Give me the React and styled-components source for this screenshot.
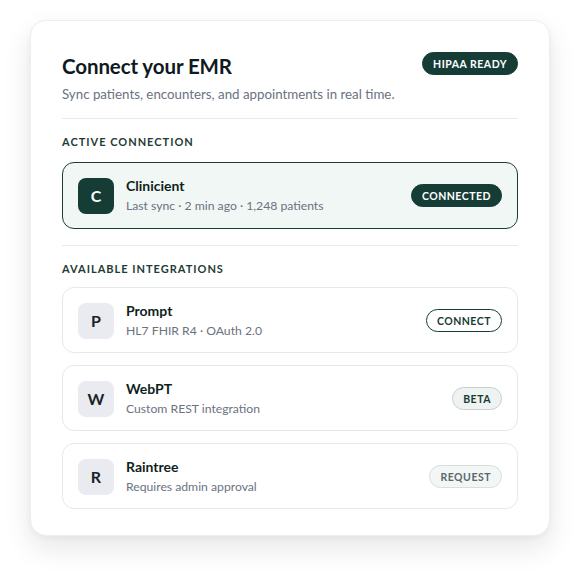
import styled, { createGlobalStyle } from "styled-components";

const GlobalStyle = createGlobalStyle`
  html, body {
    margin: 0;
    padding: 0;
    background: #ffffff;
  }
  body {
    font-family: "Lato", "Noto Sans", sans-serif;
    -webkit-font-smoothing: antialiased;
  }
`;

const integrations = [
  { letter: "P", name: "Prompt", detail: "HL7 FHIR R4 · OAuth 2.0", action: "CONNECT", kind: "outline" },
  { letter: "W", name: "WebPT", detail: "Custom REST integration", action: "BETA", kind: "soft" },
  { letter: "R", name: "Raintree", detail: "Requires admin approval", action: "REQUEST", kind: "muted" },
];

const App = () => {
  return (
    <>
      <GlobalStyle />
      <Page>
        <Card>
          <Header>
            <div>
              <Title>Connect your EMR</Title>
              <Subtitle>Sync patients, encounters, and appointments in real time.</Subtitle>
            </div>
            <Pill kind="solid">HIPAA READY</Pill>
          </Header>

          <Divider top={14} bottom={15} />

          <Section gap={12}>
            <SectionLabel>Active Connection</SectionLabel>
            <Row active>
              <Avatar active>C</Avatar>
              <RowText>
                <RowName>Clinicient</RowName>
                <RowDetail>Last sync · 2 min ago · 1,248 patients</RowDetail>
              </RowText>
              <Pill kind="solid">CONNECTED</Pill>
            </Row>
          </Section>

          <Divider top={16} bottom={15} />

          <Section gap={10}>
            <SectionLabel>Available Integrations</SectionLabel>
            <List>
              {integrations.map((item) => (
                <Row key={`integration-${item.name}`}>
                  <Avatar>{item.letter}</Avatar>
                  <RowText>
                    <RowName>{item.name}</RowName>
                    <RowDetail>{item.detail}</RowDetail>
                  </RowText>
                  <Pill kind={item.kind}>{item.action}</Pill>
                </Row>
              ))}
            </List>
          </Section>
        </Card>
      </Page>
    </>
  );
};

const Page = styled.div`
  width: 580px;
  height: 576px;
  box-sizing: border-box;
  padding: 20px 30px;
`;

const Card = styled.div`
  box-sizing: border-box;
  width: 520px;
  background: #ffffff;
  border: 1px solid #eceef1;
  border-radius: 16px;
  box-shadow: 0 12px 28px rgba(17, 24, 39, 0.1), 0 2px 6px rgba(17, 24, 39, 0.04);
  padding: 31px 31px 26px;
`;

const Header = styled.div`
  display: flex;
  justify-content: space-between;
  align-items: flex-start;
`;

const Title = styled.h1`
  margin: 0;
  font-size: 20.5px;
  line-height: 28px;
  font-weight: 700;
  color: #0f1a1f;
  letter-spacing: -0.1px;
`;

const Subtitle = styled.p`
  margin: 4px 0 0;
  font-size: 13.3px;
  line-height: 20px;
  color: #6b7280;
`;

const Divider = styled.hr`
  border: none;
  border-top: 1px solid #e7e9ed;
  margin: ${(p) => p.top}px 0 ${(p) => p.bottom}px;
`;

const Section = styled.div`
  display: flex;
  flex-direction: column;
  gap: ${(p) => p.gap}px;
`;

const SectionLabel = styled.div`
  font-size: 11px;
  line-height: 16px;
  font-weight: 700;
  letter-spacing: 1px;
  text-transform: uppercase;
  color: #1f3b36;
`;

const List = styled.div`
  display: flex;
  flex-direction: column;
  gap: 12px;
`;

const Row = styled.div`
  display: flex;
  align-items: center;
  gap: 12px;
  padding: ${(p) => (p.active ? "14px 15px" : "14px 15px 13px")};
  border-radius: 12px;
  border: 1px solid ${(p) => (p.active ? "#1b3d36" : "#e6e8ec")};
  background: ${(p) => (p.active ? "#f1f7f5" : "#ffffff")};
`;

const Avatar = styled.div`
  width: 36px;
  height: 36px;
  flex-shrink: 0;
  border-radius: 8px;
  display: flex;
  align-items: center;
  justify-content: center;
  font-size: 16px;
  font-weight: 700;
  background: ${(p) => (p.active ? "#163d35" : "#e9ebf0")};
  color: ${(p) => (p.active ? "#ffffff" : "#1a2226")};
`;

const RowText = styled.div`
  flex: 1;
  display: flex;
  flex-direction: column;
  gap: 2px;
`;

const RowName = styled.div`
  font-size: 14px;
  line-height: 18px;
  font-weight: 700;
  color: #0f1f1c;
`;

const RowDetail = styled.div`
  font-size: 12.2px;
  line-height: 17px;
  color: #6b7280;
`;

const pillStyles = {
  solid: "background: #163d35; color: #ffffff; border: 1.5px solid #163d35;",
  outline: "background: #ffffff; color: #163d35; border: 1.5px solid #163d35;",
  soft: "background: #eef3f1; color: #163d35; border: 1px solid #c6d0cc;",
  muted: "background: #f2f6f4; color: #5b6670; border: 1px solid #d8dedb;",
};

const Pill = styled.span`
  display: inline-flex;
  align-items: center;
  box-sizing: border-box;
  height: 23px;
  padding: 0 10px;
  border-radius: 999px;
  font-size: 10.5px;
  font-weight: 700;
  letter-spacing: 0.5px;
  white-space: nowrap;
  ${(p) => pillStyles[p.kind]}
`;

export default App;
